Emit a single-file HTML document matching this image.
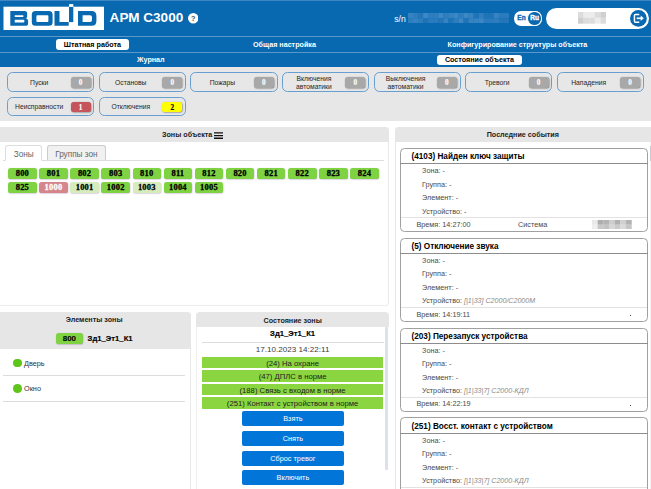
<!DOCTYPE html>
<html><head><meta charset="utf-8"><title>APM C3000</title>
<style>
*{box-sizing:border-box;margin:0;padding:0}
html,body{width:651px;height:489px;overflow:hidden;background:#fff;font-family:"Liberation Sans",sans-serif;}
.a{position:absolute}
.t{position:absolute;white-space:nowrap;line-height:1;}
.b{font-weight:bold}
.c{text-align:center}
#hdr{left:0;top:0;width:651px;height:66.6px;background:#0868b0}
.ln{position:absolute;left:0;width:651px;height:1px;background:#5b97c9}
.nb{position:absolute;background:#fff;border-radius:3px}
.nt{font-size:7.18px;font-weight:bold;color:#fff}
.sb{position:absolute;width:87.3px;height:19.7px;border:1.5px solid #669fd0;border-radius:5.5px;background:#e7e7e7}
.st{font-size:6.75px;color:#262626}
.bd{position:absolute;width:20px;height:10.8px;border-radius:2.5px;box-shadow:0.5px 0.5px 1.5px rgba(0,0,0,.45);font-family:"Liberation Serif",serif;font-size:7.2px;font-weight:bold;text-align:center;line-height:12.4px;color:#fff;-webkit-text-stroke:0.15px currentColor}
.z{position:absolute;width:28.6px;height:11px;border-radius:2.6px;background:#7fd343;box-shadow:0.3px 0.6px 1.2px rgba(60,0,90,.3);font-family:"Liberation Serif",serif;font-size:8.5px;font-weight:bold;text-align:center;line-height:11.5px;color:#000;-webkit-text-stroke:0.28px currentColor;letter-spacing:0.2px}
.ph{position:absolute;background:#e6e6e6}
.pt{font-size:7.18px;font-weight:bold;color:#222}
.card{position:absolute;left:400.3px;width:248px;height:84.2px;border:1.4px solid #a0a0a0;border-radius:4.5px;background:#fff}
.ct{font-size:8.2px;font-weight:bold;color:#000}
.f{font-size:7.28px;color:#4a4a4a}
.fi{font-size:7.1px;color:#8a8a8a;font-style:italic}
.gb{position:absolute;left:201.7px;width:181.8px;height:11.4px;background:#8bd640;font-size:7.7px;color:#222;text-align:center;line-height:13px;white-space:nowrap}
.bb{position:absolute;left:241.6px;width:102.6px;height:15px;background:#0275d8;border-radius:2px;font-size:7.3px;color:#fff;text-align:center;line-height:15px;white-space:nowrap}
</style></head><body>

<div class="a" id="hdr"></div>
<div class="ln" style="top:0;background:#3f86c2"></div>
<div class="ln" style="top:36.3px"></div>
<div class="ln" style="top:52px"></div>
<svg class="a" style="left:0;top:0" width="110" height="36" viewBox="0 0 110 36">
<rect x="3.5" y="6.7" width="100.5" height="23.3" fill="#fff"/>
<rect x="69" y="4.1" width="4.3" height="3" fill="#fff"/>
<g fill="#0868b0" fill-rule="evenodd">
<path d="M10.3 11.1H24.6Q27.2 11.1 27.2 13.6V16.2Q27.2 17.8 26 18.3Q28.1 18.9 28.1 21V23.2Q28.1 25.8 25.4 25.8H10.3ZM14.7 15.2V17H22.9Q23.5 17 23.5 16.1Q23.5 15.2 22.9 15.2ZM14.7 19.8V22.6H23.6Q24.4 22.6 24.4 21.2Q24.4 19.8 23.6 19.8Z"/>
<path d="M35.3 11.1H49Q52.6 11.1 52.6 14.6V22.3Q52.6 25.8 49 25.8H35.3Q31.8 25.8 31.8 22.3V14.6Q31.8 11.1 35.3 11.1ZM37.4 15.2Q36.4 15.2 36.4 16.2V21.1Q36.4 22.1 37.4 22.1H47.4Q48.4 22.1 48.4 21.1V16.2Q48.4 15.2 47.4 15.2Z"/>
<path d="M54.5 11.1H59.5V22.1H68.7V25.8H54.5Z"/>
<path d="M69 6.9H73.3V22.1H69Z"/>
<path d="M78 11.1H91.5Q96.4 11.1 96.4 16V20.9Q96.4 25.8 91.5 25.8H78ZM82.6 15.2V22.1H90Q92 22.1 92 20.1V17.2Q92 15.2 90 15.2Z"/>
</g></svg>
<div class="t b" style="left:109.6px;top:11.4px;font-size:13.55px;color:#fff">АРМ С3000</div>
<svg class="a" style="left:187.6px;top:13.3px" width="10.5" height="10.5" viewBox="0 0 10 10"><circle cx="5" cy="5" r="5" fill="#fff"/><text x="5" y="7.5" font-family="Liberation Sans" font-weight="bold" font-size="7" text-anchor="middle" fill="#4a4a4a">?</text></svg>
<div class="t" style="left:394.3px;top:14.6px;font-size:8.6px;color:#fff">s/n</div>
<svg class="a" style="left:408px;top:12.6px" width="101" height="10.6" viewBox="0 0 101 10.6">
<rect x="0.0" y="0.0" width="5.2" height="5.4" fill="#3583c1"/>
<rect x="0.0" y="5.3" width="5.2" height="5.4" fill="#2e7ebf"/>
<rect x="5.0" y="0.0" width="5.2" height="5.4" fill="#2e7ebf"/>
<rect x="5.0" y="5.3" width="5.2" height="5.4" fill="#3583c1"/>
<rect x="10.1" y="0.0" width="5.2" height="5.4" fill="#2476b9"/>
<rect x="10.1" y="5.3" width="5.2" height="5.4" fill="#2e7ebf"/>
<rect x="15.1" y="0.0" width="5.2" height="5.4" fill="#3d88c4"/>
<rect x="15.1" y="5.3" width="5.2" height="5.4" fill="#1f73b7"/>
<rect x="20.2" y="0.0" width="5.2" height="5.4" fill="#2e7ebf"/>
<rect x="20.2" y="5.3" width="5.2" height="5.4" fill="#2a7bbd"/>
<rect x="25.2" y="0.0" width="5.2" height="5.4" fill="#2e7ebf"/>
<rect x="25.2" y="5.3" width="5.2" height="5.4" fill="#2a7bbd"/>
<rect x="30.3" y="0.0" width="5.2" height="5.4" fill="#3d88c4"/>
<rect x="30.3" y="5.3" width="5.2" height="5.4" fill="#2476b9"/>
<rect x="35.4" y="0.0" width="5.2" height="5.4" fill="#2e7ebf"/>
<rect x="35.4" y="5.3" width="5.2" height="5.4" fill="#3583c1"/>
<rect x="40.4" y="0.0" width="5.2" height="5.4" fill="#3583c1"/>
<rect x="40.4" y="5.3" width="5.2" height="5.4" fill="#1f73b7"/>
<rect x="45.4" y="0.0" width="5.2" height="5.4" fill="#3d88c4"/>
<rect x="45.4" y="5.3" width="5.2" height="5.4" fill="#2e7ebf"/>
<rect x="50.5" y="0.0" width="5.2" height="5.4" fill="#2e7ebf"/>
<rect x="50.5" y="5.3" width="5.2" height="5.4" fill="#3d88c4"/>
<rect x="55.5" y="0.0" width="5.2" height="5.4" fill="#3d88c4"/>
<rect x="55.5" y="5.3" width="5.2" height="5.4" fill="#1f73b7"/>
<rect x="60.6" y="0.0" width="5.2" height="5.4" fill="#3583c1"/>
<rect x="60.6" y="5.3" width="5.2" height="5.4" fill="#3583c1"/>
<rect x="65.6" y="0.0" width="5.2" height="5.4" fill="#1f73b7"/>
<rect x="65.6" y="5.3" width="5.2" height="5.4" fill="#3583c1"/>
<rect x="70.7" y="0.0" width="5.2" height="5.4" fill="#2e7ebf"/>
<rect x="70.7" y="5.3" width="5.2" height="5.4" fill="#3d88c4"/>
<rect x="75.8" y="0.0" width="5.2" height="5.4" fill="#1f73b7"/>
<rect x="75.8" y="5.3" width="5.2" height="5.4" fill="#2a7bbd"/>
<rect x="80.8" y="0.0" width="5.2" height="5.4" fill="#1f73b7"/>
<rect x="80.8" y="5.3" width="5.2" height="5.4" fill="#2a7bbd"/>
<rect x="85.8" y="0.0" width="5.2" height="5.4" fill="#3583c1"/>
<rect x="85.8" y="5.3" width="5.2" height="5.4" fill="#2e7ebf"/>
<rect x="90.9" y="0.0" width="5.2" height="5.4" fill="#2a7bbd"/>
<rect x="90.9" y="5.3" width="5.2" height="5.4" fill="#2476b9"/>
<rect x="96.0" y="0.0" width="5.2" height="5.4" fill="#2a7bbd"/>
<rect x="96.0" y="5.3" width="5.2" height="5.4" fill="#2476b9"/>
</svg>
<div class="a" style="left:514.1px;top:11.2px;width:27.6px;height:14.5px;border-radius:7.25px;background:#fff"></div>
<div class="a" style="left:527.4px;top:11.3px;width:14.2px;height:14.3px;border-radius:50%;background:#0868b0;border:1px solid #fff"></div>
<div class="t b" style="left:517.3px;top:15.1px;font-size:6.5px;color:#0868b0;-webkit-text-stroke:0.35px #0868b0">En</div>
<div class="t b" style="left:530.2px;top:15.1px;font-size:6.5px;color:#fff;-webkit-text-stroke:0.35px #fff">Ru</div>
<div class="a" style="left:546.3px;top:7.7px;width:102.7px;height:21.7px;border-radius:10.85px;background:#fff"></div>
<svg class="a" style="left:577.8px;top:12.2px" width="28" height="11.6" viewBox="0 0 28 11.6">
<rect x="0.0" y="0.0" width="5.7" height="5.9" fill="#dcdcdc"/>
<rect x="0.0" y="5.8" width="5.7" height="5.9" fill="#cfcfcf"/>
<rect x="5.6" y="0.0" width="5.7" height="5.9" fill="#ececec"/>
<rect x="5.6" y="5.8" width="5.7" height="5.9" fill="#dcdcdc"/>
<rect x="11.2" y="0.0" width="5.7" height="5.9" fill="#ececec"/>
<rect x="11.2" y="5.8" width="5.7" height="5.9" fill="#dcdcdc"/>
<rect x="16.8" y="0.0" width="5.7" height="5.9" fill="#dcdcdc"/>
<rect x="16.8" y="5.8" width="5.7" height="5.9" fill="#ececec"/>
<rect x="22.4" y="0.0" width="5.7" height="5.9" fill="#cfcfcf"/>
<rect x="22.4" y="5.8" width="5.7" height="5.9" fill="#dcdcdc"/>
</svg>
<svg class="a" style="left:630px;top:10px" width="16.8" height="16.8" viewBox="0 0 17 17"><circle cx="8.5" cy="8.5" r="8.5" fill="#0868b0"/>
<path d="M9.4 4.5H5.6Q4.5 4.5 4.5 5.6V11.4Q4.5 12.5 5.6 12.5H9.4" fill="none" stroke="#fff" stroke-width="1.5"/>
<path d="M6.8 8.4H11.4" fill="none" stroke="#fff" stroke-width="1.7"/><path d="M10.8 5.6L14 8.4L10.8 11.2Z" fill="#fff"/></svg>
<div class="nb" style="left:56px;top:39.4px;width:73px;height:10.8px"></div>
<div class="t nt" style="left:63.8px;top:42px;color:#000">Штатная работа</div>
<div class="t nt" style="left:253px;top:42px">Общая настройка</div>
<div class="t nt" style="left:447.6px;top:42px">Конфигурирование структуры объекта</div>
<div class="t nt" style="left:137px;top:57px">Журнал</div>
<div class="nb" style="left:437px;top:54.7px;width:84.7px;height:10.5px"></div>
<div class="t nt" style="left:444.9px;top:57.4px;color:#000">Состояние объекта</div>
<div class="a" style="left:0;top:66.6px;width:651px;height:54.4px;background:#e7e7e7"></div>
<div class="sb" style="left:7.20px;top:72.1px"></div>
<div class="t st c" style="left:7.20px;top:79.7px;width:64px">Пуски</div>
<div class="bd" style="left:70.60px;top:76.9px;background:#a8a8a8">0</div>
<div class="sb" style="left:98.78px;top:72.1px"></div>
<div class="t st c" style="left:98.78px;top:79.7px;width:64px">Остановы</div>
<div class="bd" style="left:162.18px;top:76.9px;background:#a8a8a8">0</div>
<div class="sb" style="left:190.36px;top:72.1px"></div>
<div class="t st c" style="left:190.36px;top:79.7px;width:64px">Пожары</div>
<div class="bd" style="left:253.76px;top:76.9px;background:#a8a8a8">0</div>
<div class="sb" style="left:281.94px;top:72.1px"></div>
<div class="t st c" style="left:281.94px;top:75px;width:64px;line-height:7.9px;white-space:normal">Включения<br>автоматики</div>
<div class="bd" style="left:345.34px;top:76.9px;background:#a8a8a8">0</div>
<div class="sb" style="left:373.52px;top:72.1px"></div>
<div class="t st c" style="left:373.52px;top:75px;width:64px;line-height:7.9px;white-space:normal">Выключения<br>автоматики</div>
<div class="bd" style="left:436.92px;top:76.9px;background:#a8a8a8">0</div>
<div class="sb" style="left:465.10px;top:72.1px"></div>
<div class="t st c" style="left:465.10px;top:79.7px;width:64px">Тревоги</div>
<div class="bd" style="left:528.50px;top:76.9px;background:#a8a8a8">0</div>
<div class="sb" style="left:556.68px;top:72.1px"></div>
<div class="t st c" style="left:556.68px;top:79.7px;width:64px">Нападения</div>
<div class="bd" style="left:620.08px;top:76.9px;background:#a8a8a8">0</div>
<div class="sb" style="left:7.20px;top:96.7px"></div>
<div class="t st c" style="left:7.20px;top:104.3px;width:64px">Неисправности</div>
<div class="bd" style="left:70.60px;top:101.5px;background:#c5555b;color:#fff">1</div>
<div class="sb" style="left:98.78px;top:96.7px"></div>
<div class="t st c" style="left:98.78px;top:104.3px;width:64px">Отключения</div>
<div class="bd" style="left:162.18px;top:101.5px;background:#ffff00;color:#000">2</div>
<div class="a" style="left:0;top:127.2px;width:389.4px;height:179.2px;border-right:1.3px solid #e9e9e9;border-bottom:1.2px solid #ececec;border-radius:0 4px 4px 0;background:#fff"></div>
<div class="ph" style="left:0;top:127.2px;width:389.4px;height:14.6px;border-radius:0 4px 0 0"></div>
<div class="t pt" style="left:162px;top:132.2px">Зоны объекта</div>
<svg class="a" style="left:213.7px;top:131.5px" width="9.7" height="7.2" viewBox="0 0 9.7 7.2"><path d="M0 .9h9.7M0 3.6h9.7M0 6.3h9.7" stroke="#111" stroke-width="1.4"/></svg>
<div class="a" style="left:3px;top:160px;width:380.5px;height:1px;background:#ddd"></div>
<div class="a" style="left:5px;top:145.2px;width:37.2px;height:15.8px;border:1px solid #ddd;border-bottom:1px solid #fff;border-radius:3px 3px 0 0;background:#fff"></div>
<div class="a" style="left:46.8px;top:145.2px;width:59.4px;height:15px;border:1px solid #ccc;border-bottom:none;border-radius:3px 3px 0 0;background:#f1f1f1"></div>
<div class="t" style="left:13.7px;top:150.7px;font-size:8.2px;color:#666">Зоны</div>
<div class="t" style="left:55.2px;top:150.7px;font-size:8.2px;color:#666">Группы зон</div>
<div class="z" style="left:8.10px;top:167.70px;">800</div>
<div class="z" style="left:39.20px;top:167.70px;">801</div>
<div class="z" style="left:70.30px;top:167.70px;">802</div>
<div class="z" style="left:101.40px;top:167.70px;">803</div>
<div class="z" style="left:132.50px;top:167.70px;">810</div>
<div class="z" style="left:163.60px;top:167.70px;">811</div>
<div class="z" style="left:194.70px;top:167.70px;">812</div>
<div class="z" style="left:225.80px;top:167.70px;">820</div>
<div class="z" style="left:256.90px;top:167.70px;">821</div>
<div class="z" style="left:288.00px;top:167.70px;">822</div>
<div class="z" style="left:319.10px;top:167.70px;">823</div>
<div class="z" style="left:350.20px;top:167.70px;">824</div>
<div class="z" style="left:8.10px;top:181.90px;">825</div>
<div class="z" style="left:39.20px;top:181.90px;background:#d5868b;color:#fff;">1000</div>
<div class="z" style="left:70.30px;top:181.90px;background:#d6ecbd;">1001</div>
<div class="z" style="left:101.40px;top:181.90px;">1002</div>
<div class="z" style="left:132.50px;top:181.90px;background:#d6ecbd;">1003</div>
<div class="z" style="left:163.60px;top:181.90px;">1004</div>
<div class="z" style="left:194.70px;top:181.90px;">1005</div>
<div class="a" style="left:0;top:311.6px;width:191.2px;height:180px;border-right:1.3px solid #e9e9e9;background:#fff;border-radius:0 4px 0 0"></div>
<div class="ph" style="left:0;top:311.6px;width:191.2px;height:37.8px;border-radius:0 4px 0 0"></div>
<div class="t pt" style="left:65.8px;top:317.4px">Элементы зоны</div>
<div class="z" style="left:55.9px;top:333px;width:27px;height:11.3px;line-height:12.3px;font-size:8px;letter-spacing:0;-webkit-text-stroke:0.1px #000;font-family:Liberation Sans,sans-serif">800</div>
<div class="t b" style="left:87.6px;top:335px;font-size:7.7px;color:#000;-webkit-text-stroke:0.15px #000">Зд1_Эт1_К1</div>
<div class="a" style="left:13.2px;top:358.60px;width:8.6px;height:8.6px;border-radius:50%;background:#5ec51b"></div>
<div class="t" style="left:24px;top:359.60px;font-size:7.3px;color:#333">Дверь</div>
<div class="a" style="left:3px;top:375.40px;width:182px;height:1px;background:#ddd"></div>
<div class="a" style="left:13.2px;top:384.10px;width:8.6px;height:8.6px;border-radius:50%;background:#5ec51b"></div>
<div class="t" style="left:24px;top:385.10px;font-size:7.3px;color:#333">Окно</div>
<div class="a" style="left:3px;top:400.90px;width:182px;height:1px;background:#ddd"></div>
<div class="ph" style="left:195.6px;top:311.6px;width:193.8px;height:15.2px;border-radius:4px 4px 0 0"></div>
<div class="a" style="left:195.6px;top:327px;width:1px;height:165px;background:#efefef"></div>
<div class="t pt" style="left:195.6px;top:317.6px;width:194.2px;text-align:center">Состояние зоны</div>
<div class="a" style="left:384.9px;top:327.4px;width:3.5px;height:142.6px;background:#dde2e9;border-radius:1px"></div>
<div class="t b c" style="left:201.6px;top:330.4px;width:182px;font-size:7.7px;color:#000;-webkit-text-stroke:0.15px #000">Зд1_Эт1_К1</div>
<div class="a" style="left:202px;top:341.6px;width:181.5px;height:1px;background:#ddd"></div>
<div class="t c" style="left:201.6px;top:346.3px;width:182px;font-size:8.1px;color:#3c3c3c">17.10.2023 14:22:11</div>
<div class="gb" style="top:357.00px">(24) На охране</div>
<div class="gb" style="top:370.45px">(47) ДПЛС в норме</div>
<div class="gb" style="top:383.90px">(188) Связь с входом в норме</div>
<div class="gb" style="top:397.35px">(251) Контакт с устройством в норме</div>
<div class="bb" style="top:411.20px">Взять</div>
<div class="bb" style="top:430.90px">Снять</div>
<div class="bb" style="top:450.60px">Сброс тревог</div>
<div class="bb" style="top:470.30px">Включить</div>
<div class="a" style="left:394.6px;top:127.2px;width:260px;height:370px;border-left:1.8px solid #e8e8e8;border-radius:4px 0 0 0;background:#fff"></div>
<div class="ph" style="left:394.6px;top:127.2px;width:260px;height:15.2px;border-radius:4px 0 0 0"></div>
<div class="t pt" style="left:394.6px;top:132.2px;width:256.4px;text-align:center">Последние события</div>
<div class="a" style="left:649.7px;top:142.4px;width:1.3px;height:350px;background:#f3f3f3"></div><div class="a" style="left:649.6px;top:146.4px;width:1.4px;height:14.8px;background:#c6cad0"></div>
<div class="card" style="top:148.00px"></div>
<div class="a" style="left:400.3px;top:163.40px;width:248px;height:1px;background:#8c8c8c"></div>
<div class="a" style="left:401.3px;top:217.40px;width:246px;height:1px;background:#e2e2e2"></div>
<div class="t ct" style="left:411.5px;top:153.20px">(4103) Найден ключ защиты</div>
<div class="t f" style="left:422px;top:167.20px">Зона: -</div>
<div class="t f" style="left:422px;top:180.65px">Группа: -</div>
<div class="t f" style="left:422px;top:194.10px">Элемент: -</div>
<div class="t f" style="left:422px;top:207.55px">Устройство: -</div>
<div class="t f" style="left:416.4px;top:220.80px">Время: 14:27:00</div>
<div class="t f" style="left:518px;top:220.80px">Система</div>
<svg class="a" style="left:592px;top:220.10px" width="40" height="9.4" viewBox="0 0 40 9.4">
<rect x="0.00" y="0" width="5.8" height="4.8" fill="#e9e9e9"/><rect x="0.00" y="4.6" width="5.8" height="4.7" fill="#eeeeee"/>
<rect x="5.66" y="0" width="5.8" height="4.8" fill="#aeaeae"/><rect x="5.66" y="4.6" width="5.8" height="4.7" fill="#c8c8c8"/>
<rect x="11.32" y="0" width="5.8" height="4.8" fill="#b4b4b4"/><rect x="11.32" y="4.6" width="5.8" height="4.7" fill="#c2c2c2"/>
<rect x="16.98" y="0" width="5.8" height="4.8" fill="#cdcdcd"/><rect x="16.98" y="4.6" width="5.8" height="4.7" fill="#d6d6d6"/>
<rect x="22.64" y="0" width="5.8" height="4.8" fill="#b0b0b0"/><rect x="22.64" y="4.6" width="5.8" height="4.7" fill="#cacaca"/>
<rect x="28.30" y="0" width="5.8" height="4.8" fill="#d0d0d0"/><rect x="28.30" y="4.6" width="5.8" height="4.7" fill="#dadada"/>
<rect x="33.96" y="0" width="5.8" height="4.8" fill="#b3b3b3"/><rect x="33.96" y="4.6" width="5.8" height="4.7" fill="#c6c6c6"/>
</svg>
<div class="card" style="top:237.82px"></div>
<div class="a" style="left:400.3px;top:253.22px;width:248px;height:1px;background:#8c8c8c"></div>
<div class="a" style="left:401.3px;top:307.22px;width:246px;height:1px;background:#e2e2e2"></div>
<div class="t ct" style="left:411.5px;top:243.02px">(5) Отключение звука</div>
<div class="t f" style="left:422px;top:257.02px">Зона: -</div>
<div class="t f" style="left:422px;top:270.47px">Группа: -</div>
<div class="t f" style="left:422px;top:283.92px">Элемент: -</div>
<div class="t f" style="left:422px;top:297.37px">Устройство: <span class="fi">[|1|33] С2000/С2000М</span></div>
<div class="t f" style="left:416.4px;top:310.62px">Время: 14:19:11</div>
<div class="a" style="left:629.6px;top:314.82px;width:1.4px;height:1.4px;background:#444"></div>
<div class="card" style="top:327.64px"></div>
<div class="a" style="left:400.3px;top:343.04px;width:248px;height:1px;background:#8c8c8c"></div>
<div class="a" style="left:401.3px;top:397.04px;width:246px;height:1px;background:#e2e2e2"></div>
<div class="t ct" style="left:411.5px;top:332.84px">(203) Перезапуск устройства</div>
<div class="t f" style="left:422px;top:346.84px">Зона: -</div>
<div class="t f" style="left:422px;top:360.29px">Группа: -</div>
<div class="t f" style="left:422px;top:373.74px">Элемент: -</div>
<div class="t f" style="left:422px;top:387.19px">Устройство: <span class="fi">[|1|33|7] С2000-КДЛ</span></div>
<div class="t f" style="left:416.4px;top:400.44px">Время: 14:22:19</div>
<div class="a" style="left:629.6px;top:404.64px;width:1.4px;height:1.4px;background:#444"></div>
<div class="card" style="top:417.46px"></div>
<div class="a" style="left:400.3px;top:432.86px;width:248px;height:1px;background:#8c8c8c"></div>
<div class="a" style="left:401.3px;top:486.86px;width:246px;height:1px;background:#e2e2e2"></div>
<div class="t ct" style="left:411.5px;top:422.66px">(251) Восст. контакт с устройством</div>
<div class="t f" style="left:422px;top:436.66px">Зона: -</div>
<div class="t f" style="left:422px;top:450.11px">Группа: -</div>
<div class="t f" style="left:422px;top:463.56px">Элемент: -</div>
<div class="t f" style="left:422px;top:477.01px">Устройство: <span class="fi">[|1|33|7] С2000-КДЛ</span></div>
<div class="t f" style="left:416.4px;top:490.26px">Время: 14:22:19</div>
<div class="a" style="left:629.6px;top:494.46px;width:1.4px;height:1.4px;background:#444"></div>
</body></html>
